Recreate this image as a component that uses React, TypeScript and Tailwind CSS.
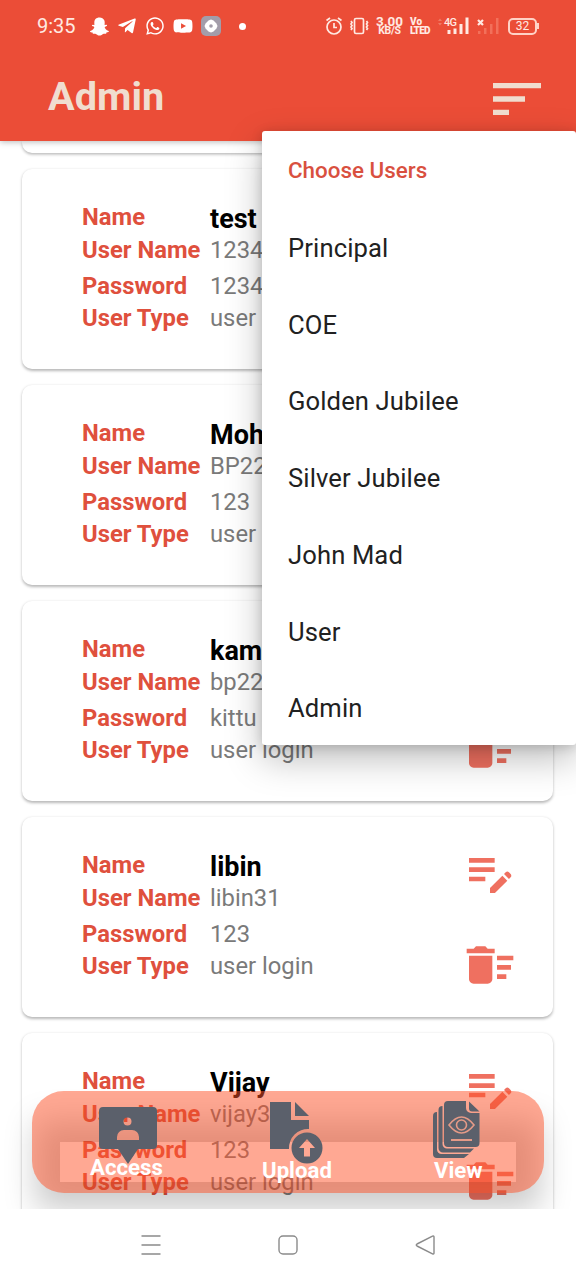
import { FaSnapchatGhost, FaTelegramPlane, FaWhatsapp, FaYoutube } from "react-icons/fa";

type User = { name: string; userName: string; password: string; type: string };

const users: User[] = [
  { name: "test", userName: "1234", password: "1234", type: "user" },
  { name: "Moha", userName: "BP220", password: "123", type: "user" },
  { name: "kama", userName: "bp220", password: "kittu", type: "user login" },
  { name: "libin", userName: "libin31", password: "123", type: "user login" },
  { name: "Vijay", userName: "vijay3", password: "123", type: "user login" },
];

const menuItems = ["Principal", "COE", "Golden Jubilee", "Silver Jubilee", "John Mad", "User", "Admin"];

function StatusBar() {
  return (
    <div className="flex h-[52px] items-center pl-[37px] text-[#ffe9e2]">
      <span className="w-[39px] text-[20px] leading-5 whitespace-nowrap">9:35</span>
      <div className="ml-[14px] flex items-center gap-[8px] text-white">
        <FaSnapchatGhost size={19} />
        <FaTelegramPlane size={20} />
        <FaWhatsapp size={20} />
        <FaYoutube size={20} />
        <svg width="20" height="20" viewBox="0 0 20 20">
          <rect width="20" height="20" rx="5" fill="#a39daa" />
          <path d="M10 3.500l2.500 1.100 2.900 2.900L16.500 10l-1.100 2.500-2.900 2.900L10 16.500l-2.500-1.100-2.900-2.900L3.500 10l1.100-2.500 2.900-2.900z" fill="#fff" />
          <circle cx="10" cy="10" r="1.800" fill="#a39daa" />
        </svg>
      </div>
      <span className="ml-[18px] h-[7px] w-[7px] rounded-full bg-white" />
      <svg className="ml-[79px]" width="18" height="20" viewBox="0 0 18 20" fill="none" stroke="currentColor" strokeWidth="1.700">
        <circle cx="9" cy="11" r="7" />
        <path d="M9 7v4.500h3M1.500 4.500L5 2M16.500 4.500L13 2" />
      </svg>
      <svg className="ml-[6px]" width="20" height="20" viewBox="0 0 20 20" fill="none" stroke="currentColor" strokeWidth="1.700">
        <rect x="5.500" y="2.500" width="9" height="15" rx="1.500" />
        <path d="M2 5l1 1.500-1 1.500 1 1.500-1 1.500 1 1.500-1 1.500M17.500 5l1 1.500-1 1.500 1 1.500-1 1.500 1 1.500-1 1.500" />
      </svg>
      <div className="ml-[7px] flex w-[27px] flex-col items-center font-bold whitespace-nowrap">
        <span className="text-[13.500px] leading-[10px]">3.00</span>
        <span className="text-[10.500px] leading-[10px] tracking-[-0.300px]">KB/S</span>
      </div>
      <div className="ml-[7px] flex w-[20px] flex-col font-black whitespace-nowrap">
        <span className="text-[10px] leading-[9px]">Vo</span>
        <span className="text-[10px] leading-[9px] tracking-[-0.800px]">LTED</span>
      </div>
      <div className="relative ml-[8px] h-[20px] w-[32px]">
        <span className="absolute top-[1px] left-[6px] text-[11px] leading-[11px] font-medium tracking-[-0.800px]">4G</span>
        <svg className="absolute inset-0" width="32" height="20" viewBox="0 0 32 20">
          <path d="M0 5l2-2.500L4 5zM0 7h4L2 9.500z" fill="#f07a64" />
          <path d="M9.500 14h3v4h-3zM15.500 12.500h3v5.500h-3zM21.500 8h3v10h-3zM27.500 1.500h3v16.500h-3z" fill="currentColor" />
        </svg>
      </div>
      <svg className="ml-[6px]" width="24" height="20" viewBox="0 0 24 20">
        <path d="M2 15h2.500v3H2zM8 12h2.500v6H8zM14 8h2.500v10H14zM20 2h2.500v16H20z" fill="#f2705a" />
        <path d="M2 4l5 5M7 4l-5 5" stroke="#ffe9e2" strokeWidth="2.200" />
      </svg>
      <div className="ml-[8px] flex items-center">
        <span className="flex h-[17px] w-[29px] items-center justify-center rounded-[5px] border-2 border-[#ffd2c6] text-[12px] leading-none">32</span>
        <span className="h-[6px] w-[2px] bg-[#ffd2c6]" />
      </div>
    </div>
  );
}

function EditIcon() {
  return (
    <svg width="56" height="56" viewBox="0 0 24 24" fill="#ef7060">
      <path d="M3 10h11v2H3v-2zm0-2h11V6H3v2zm0 8h7v-2H3v2zm15.010-3.130.710-.710a.996.996 0 0 1 1.410 0l.710.710c.390.390.390 1.020 0 1.410l-.710.710-2.120-2.120zm-.710.710-5.300 5.300V21h2.120l5.300-5.300-2.120-2.120z" />
    </svg>
  );
}

function DeleteIcon() {
  return (
    <svg width="56" height="56" viewBox="0 0 24 24" fill="#ef7060">
      <path d="M15 16h4v2h-4zm0-8h7v2h-7zm0 4h6v2h-6zM3 18c0 1.100.900 2 2 2h6c1.100 0 2-.900 2-2V8H3v10zM14 5h-3l-1-1H6L5 5H2v2h12z" />
    </svg>
  );
}

function UserCard({ user }: { user: User }) {
  return (
    <article className="flex h-[200px] w-[531px] shrink-0 justify-between rounded-[10px] bg-white pt-[32px] pr-[35px] pl-[60px] shadow-[0_1.500px_3px_rgba(0,0,0,0.28)]">
      <dl className="grid grid-cols-[128px_auto] grid-rows-[32px_34px_37px_27px] items-center text-[23.800px] leading-8 whitespace-nowrap text-[#7a7a7a] [&>dt]:font-bold [&>dt]:text-[#df503d]">
        <dt>Name</dt>
        <dd className="pt-1 text-[27px] font-bold text-black">{user.name}</dd>
        <dt>User Name</dt>
        <dd>{user.userName}</dd>
        <dt>Password</dt>
        <dd>{user.password}</dd>
        <dt>User Type</dt>
        <dd>{user.type}</dd>
      </dl>
      <div className="-mt-[5px] flex flex-col gap-[37px]">
        <EditIcon />
        <DeleteIcon />
      </div>
    </article>
  );
}

function UserMenu() {
  return (
    <div className="absolute top-[131px] left-[262px] flex h-[614px] w-[314px] flex-col rounded-[3px] bg-white pt-[1.500px] pl-[26px] shadow-[0_14px_36px_rgba(0,0,0,0.26),0_2px_12px_rgba(0,0,0,0.16)]">
      <div className="flex h-[77px] shrink-0 items-center text-[22.400px] font-medium text-[#d9503f]">Choose Users</div>
      {menuItems.map((item) => (
        <div key={item} className="flex h-[76.800px] shrink-0 items-center text-[25.600px] tracking-[0.120px] text-[#212121]">
          {item}
        </div>
      ))}
    </div>
  );
}

function AccessIcon() {
  return (
    <svg width="58" height="58" viewBox="0 0 58 58" fill="#5b606b">
      <path fillRule="evenodd" d="M4 0h50a4 4 0 0 1 4 4v34a4 4 0 0 1-4 4H39L29 57 19 42H4a4 4 0 0 1-4-4V4a4 4 0 0 1 4-4zM28.500 10.500a4 4 0 1 0 0 8 4 4 0 0 0 0-8zM18 33h22v-3a7 7 0 0 0-7-7h-8a7 7 0 0 0-7 7z" />
    </svg>
  );
}

function UploadIcon() {
  return (
    <svg width="54" height="62" viewBox="0 0 54 62" fill="#5b606b">
      <path d="M0 0h21v18h18v9A19 19 0 0 0 19 47H0z" />
      <path d="M25 0l14 14H25z" />
      <path fillRule="evenodd" d="M37 30.500a15.500 15.500 0 1 1 0 31 15.500 15.500 0 0 1 0-31zM37 37l-8 9h5v8.500h6V46h5z" />
    </svg>
  );
}

function ViewIcon() {
  return (
    <svg width="48" height="58" viewBox="0 0 48 58" fill="#5b606b">
      <path d="M15 0h18v7a5 5 0 0 0 5 5h8.500v30a4 4 0 0 1-4 4H15a4 4 0 0 1-4-4V4a4 4 0 0 1 4-4zM36 0.500l10.500 10h-7.500a3 3 0 0 1-3-3z" />
      <path d="M9.500 5v38a4.500 4.500 0 0 0 4.500 4.500h27l-4 4H10a4.500 4.500 0 0 1-4.500-4.500V9a4 4 0 0 1 4-4z" />
      <path d="M4 11v37.500a4.500 4.500 0 0 0 4.500 4.500H36l-5 4H4a4 4 0 0 1-4-4V15a4 4 0 0 1 4-4z" />
      <g fill="none" stroke="#e59a87" strokeWidth="1.600">
        <path d="M16 24q12.500-16 25 0-12.500 16-25 0z" />
        <circle cx="28.500" cy="24" r="5" />
        <path d="M18 39h21" strokeWidth="2" />
      </g>
    </svg>
  );
}

function ActionBar() {
  return (
    <>
      <div className="absolute top-[1142px] left-[60px] h-[40px] w-[456px] shadow-[0_3px_32px_24px_rgba(0,0,0,0.21)]" />
      <div className="absolute top-[1091px] left-[32px] h-[102px] w-[512px] rounded-[32px] bg-[rgba(255,81,39,0.5)] text-[22.200px] font-bold text-white">
        <div className="absolute top-[16px] left-[67px]"><AccessIcon /></div>
        <div className="absolute top-[11px] left-[238px]"><UploadIcon /></div>
        <div className="absolute top-[10px] left-[401px]"><ViewIcon /></div>
        <span className="absolute top-[62px] left-[58px] leading-7">Access</span>
        <span className="absolute top-[65px] left-[230px] leading-7">Upload</span>
        <span className="absolute top-[65px] left-[402px] leading-7">View</span>
      </div>
    </>
  );
}

export default function App() {
  return (
    <div className="relative flex h-[1280px] w-[576px] flex-col overflow-hidden bg-white font-[Roboto,sans-serif]">
      <header className="z-10 h-[141px] shrink-0 bg-[#eb4d37] shadow-[0_1px_6px_rgba(0,0,0,0.28)]">
        <StatusBar />
        <div className="flex h-[89px] items-center justify-between pr-[27px] pl-[48px]">
          <h1 className="text-[39.700px] font-bold text-[#f0ddcf]">Admin</h1>
          <svg className="mt-[5px]" width="64" height="64" viewBox="0 0 24 24" fill="#f0ddcf">
            <path d="M3 18h6v-2H3v2zM3 6v2h18V6H3zm0 7h12v-2H3v2z" />
          </svg>
        </div>
      </header>
      <main className="flex h-[1068px] shrink-0 flex-col gap-[16px] overflow-hidden bg-white pl-[22px]">
        <div className="h-[12px] w-[531px] shrink-0 rounded-b-[10px] bg-white shadow-[0_1.500px_3px_rgba(0,0,0,0.28)]" />
        {users.map((user) => (
          <UserCard key={user.name} user={user} />
        ))}
      </main>
      <div className="absolute inset-x-0 top-0 h-[1209px] overflow-hidden">
        <ActionBar />
      </div>
      <nav className="flex h-[71px] items-center justify-center gap-[117px] bg-white text-[#8b8b8b]">
        <svg width="20" height="20" viewBox="0 0 20 20" stroke="currentColor" strokeWidth="1.400">
          <path d="M.5 1h19M.5 10h19M.5 19h19" />
        </svg>
        <svg width="20" height="20" viewBox="0 0 20 20" fill="none" stroke="currentColor" strokeWidth="1.400">
          <rect x="1" y="1" width="18" height="18" rx="4" />
        </svg>
        <svg width="20" height="20" viewBox="0 0 20 20" fill="none" stroke="currentColor" strokeWidth="1.400" strokeLinejoin="round">
          <path d="M17.500 1.200Q19 .5 19 2v16q0 1.500-1.500.8L2 11Q.5 10 2 9z" />
        </svg>
      </nav>
      <div className="absolute inset-0 z-20">
        <UserMenu />
      </div>
    </div>
  );
}
